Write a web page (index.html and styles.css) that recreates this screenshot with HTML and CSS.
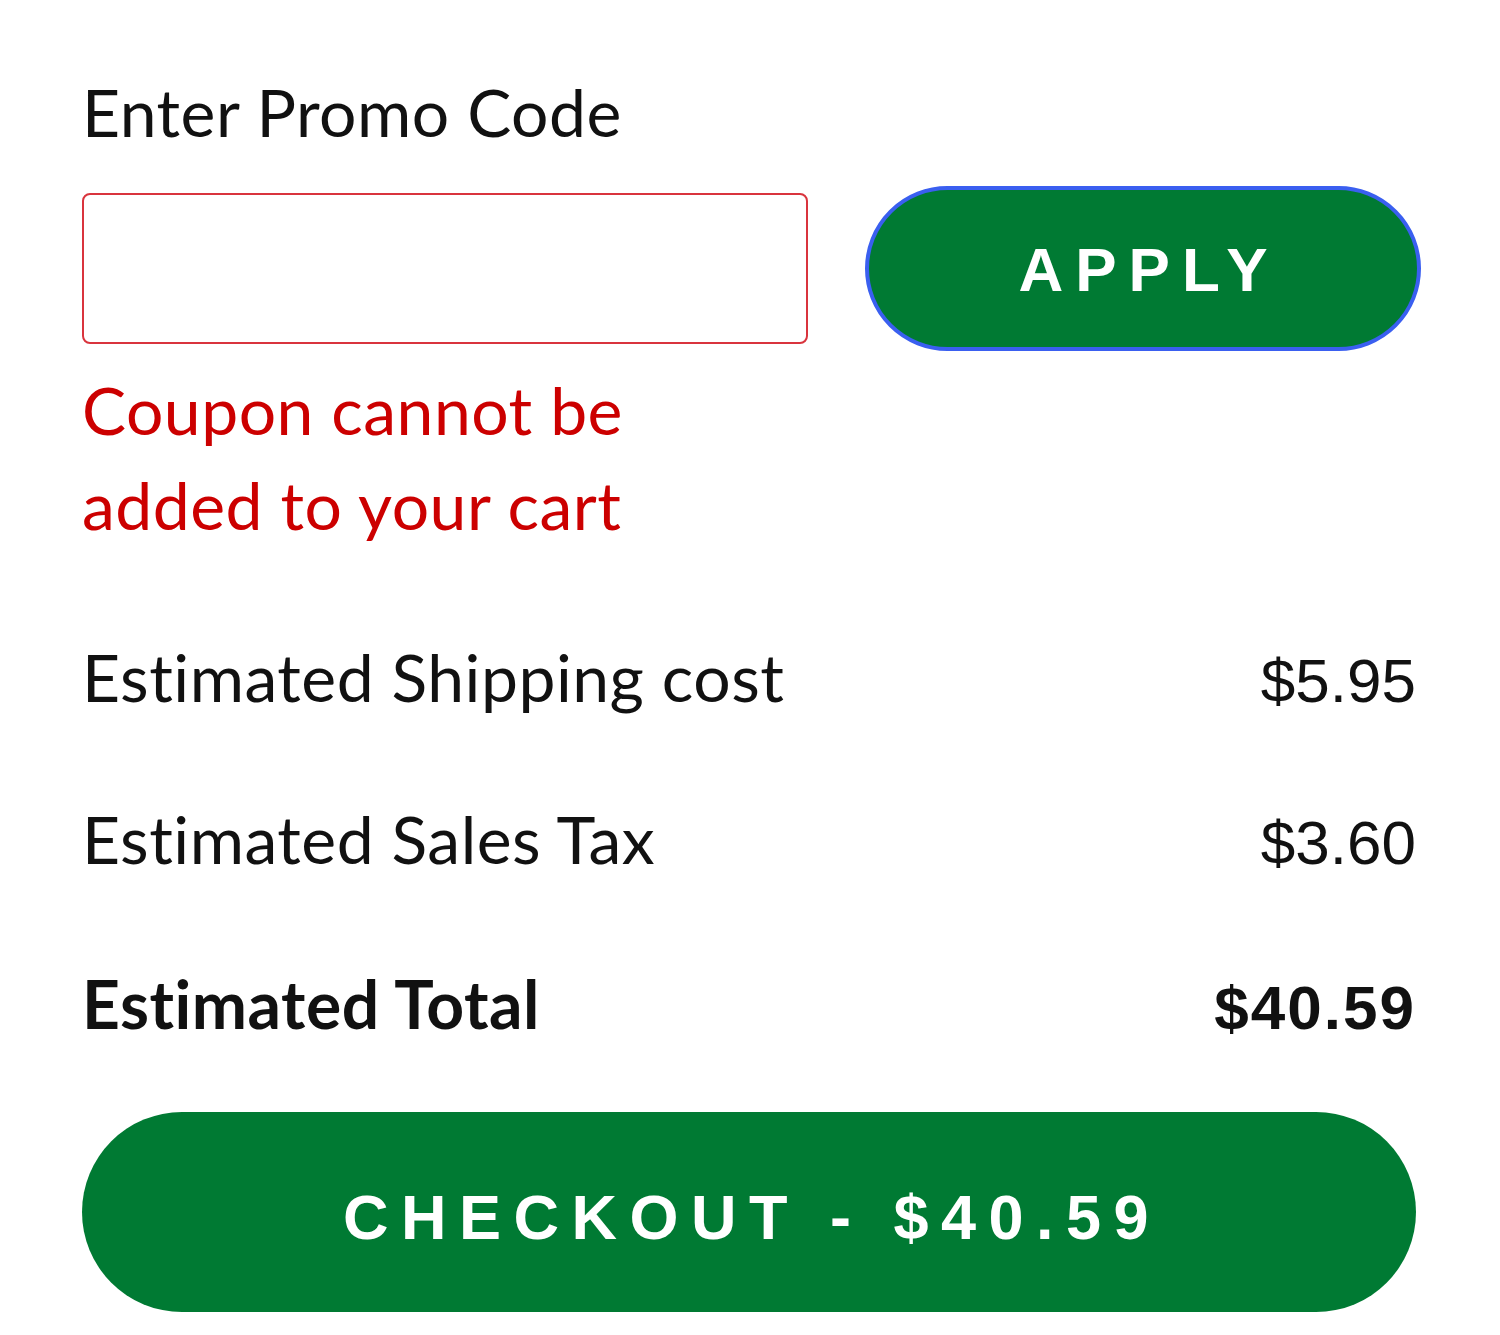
FILE: index.html
```html
<!DOCTYPE html>
<html lang="en">
<head>
    <meta charset="UTF-8">
    <meta name="viewport" content="width=device-width, initial-scale=1.0">
    <title>Cart Summary</title>
    <link rel="stylesheet" href="styles.css">
</head>
<body>
    <div class="cart-summary">
        <label class="promo-label" for="promo">Enter Promo Code</label>

        <div class="promo-row">
            <input id="promo" class="promo-input" type="text">
            <button class="apply-btn">APPLY</button>
        </div>

        <div class="promo-error">Coupon cannot be<br>added to your cart</div>

        <div class="summary-line">
            <span class="line-label">Estimated Shipping cost</span>
            <span class="line-value">$5.95</span>
        </div>
        <div class="summary-line">
            <span class="line-label">Estimated Sales Tax</span>
            <span class="line-value">$3.60</span>
        </div>
        <div class="summary-line total">
            <span class="line-label">Estimated Total</span>
            <span class="line-value">$40.59</span>
        </div>

        <button class="checkout-btn">CHECKOUT - $40.59</button>
    </div>
</body>
</html>
```

FILE: styles.css
```css
body {
    margin: 0;
    background: #ffffff;
    color: #111111;
    font-family: 'Lato', 'Open Sans', sans-serif;
}
.cart-summary {
    padding: 72px 84px 0 82px;
}
.promo-label {
    display: block;
    font-size: 66px;
    line-height: 80px;
    letter-spacing: 0.5px;
    margin-bottom: 34px;
}
.promo-row {
    display: flex;
    align-items: center;
    gap: 57px;
}
.promo-input {
    flex: none;
    width: 726px;
    height: 151px;
    box-sizing: border-box;
    border: 2px solid #d9343d;
    border-radius: 8px;
    background: #fff;
    font-size: 40px;
    padding: 0 24px;
    outline: none;
}
.apply-btn {
    flex: none;
    width: 556px;
    height: 165px;
    box-sizing: border-box;
    background: #007a33;
    border: 4px solid #3a5ff0;
    border-radius: 90px;
    color: #ffffff;
    font-family: 'Liberation Sans', Arial, sans-serif;
    font-weight: bold;
    font-size: 62px;
    letter-spacing: 12px;
    padding: 2px 0 0 12px;
    cursor: pointer;
}
.promo-error {
    color: #cc0000;
    font-size: 66px;
    line-height: 95px;
    letter-spacing: 0.5px;
    margin-top: 11px;
}
.summary-line {
    display: flex;
    justify-content: space-between;
    align-items: baseline;
    font-size: 66px;
    line-height: 80px;
    letter-spacing: 0.5px;
    margin-top: 78px;
}
.promo-error + .summary-line {
    margin-top: 85px;
}
.line-value {
    font-family: 'Liberation Sans', Arial, sans-serif;
    font-size: 62px;
    letter-spacing: 0;
}
.summary-line.total {
    margin-top: 81px;
}
.total .line-label { font-weight: bold; }
.total .line-value { font-weight: bold; letter-spacing: 2px; }
.checkout-btn {
    display: block;
    width: 100%;
    height: 200px;
    margin-top: 64px;
    background: #007a33;
    border: none;
    border-radius: 100px;
    color: #ffffff;
    font-family: 'Liberation Sans', Arial, sans-serif;
    font-weight: bold;
    font-size: 63px;
    letter-spacing: 12.5px;
    padding: 10px 0 0 6px;
    cursor: pointer;
}
```
